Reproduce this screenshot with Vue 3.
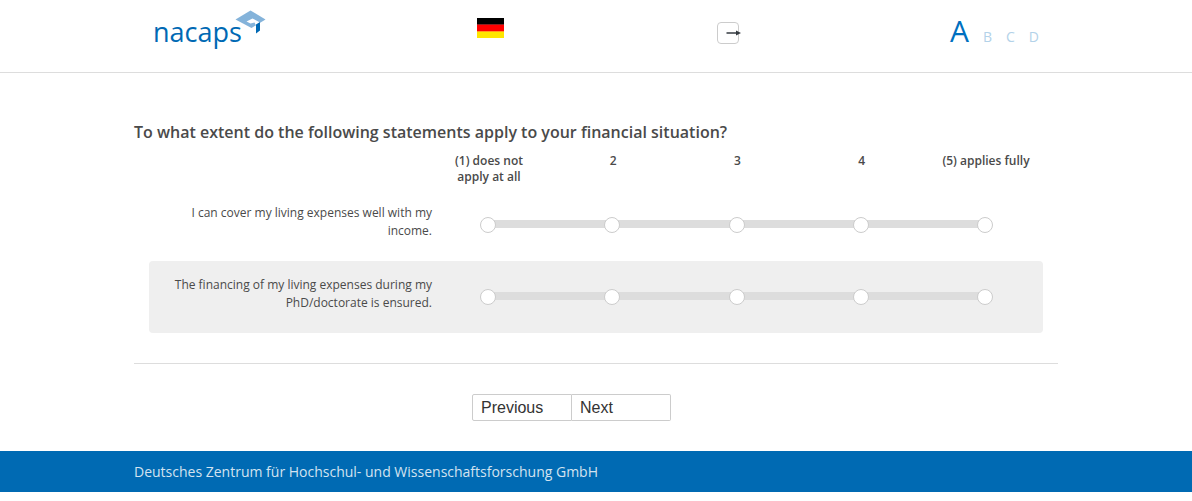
<script setup>
import { reactive } from 'vue'

const sections = ['A', 'B', 'C', 'D']
const scale = ['(1) does not apply at all', '2', '3', '4', '(5) applies fully']
const items = [
  { id: 'income', text: 'I can cover my living expenses well with my income.' },
  { id: 'doctorate', text: 'The financing of my living expenses during my PhD/doctorate is ensured.' },
]
const answers = reactive({ income: null, doctorate: null })
</script>

<template>
  <div class="page">
    <header class="header">
      <div class="header-inner">
        <a class="logo" href="#" aria-label="nacaps">
          <svg width="114" height="42" viewBox="0 0 114 42">
            <text x="0" y="34" class="logo-text">nacaps</text>
            <path d="M82.500 11.500 L97.500 2.500 L112.500 11.500 L98.500 20 Z" fill="#84b3da" />
            <path d="M93.500 13.500 L99.500 10.500 L107 14.500 L103 17.500 L101.500 14.500 L97.500 15.500 Z" fill="#fff" />
            <path d="M103 16.500 L107 14 L107 22.500 L103 25.500 Z" fill="#0069b4" />
          </svg>
        </a>
        <a class="flag" href="#" aria-label="Deutsch">
          <svg width="27" height="20" viewBox="0 0 27 20">
            <rect width="27" height="20" fill="#ffe600" />
            <rect width="27" height="13" fill="#f00" />
            <rect width="27" height="6" fill="#000" />
            <rect y="6" width="27" height="1" fill="#8c2020" />
            <rect y="13" width="27" height="1" fill="#ff9a20" />
          </svg>
        </a>
        <a class="exit" href="#" aria-label="Exit">
          <svg width="24" height="22" viewBox="0 0 24 22">
            <rect x="0.500" y="0.500" width="21" height="21" rx="3.500" fill="#fff" stroke="#ccc" />
            <path d="M9.500 11 H20" stroke="#343a40" stroke-width="1.500" />
            <path d="M19 8.500 L24 11 L19 13.500 Z" fill="#343a40" />
          </svg>
        </a>
        <ol class="sections">
          <li v-for="(name, i) in sections" :key="name" :class="{ current: i === 0 }">{{ name }}</li>
        </ol>
      </div>
    </header>

    <main class="content">
      <h1 class="title">To what extent do the following statements apply to your financial situation?</h1>
      <div class="matrix">
        <div class="row head">
          <div class="question"></div>
          <div class="options">
            <span v-for="label in scale" :key="label" class="option">{{ label }}</span>
          </div>
        </div>
        <div
          v-for="item in items"
          :key="item.id"
          class="row item"
          role="radiogroup"
          :aria-labelledby="item.id"
        >
          <div :id="item.id" class="question">{{ item.text }}</div>
          <div class="options track">
            <label v-for="(label, n) in scale" :key="label" class="option">
              <input v-model="answers[item.id]" type="radio" :name="item.id + '-answer'" :value="n + 1" :aria-label="label" />
            </label>
          </div>
        </div>
      </div>
      <div class="actions">
        <button type="button">Previous</button>
        <button type="button">Next</button>
      </div>
    </main>

    <footer class="footer">
      <div class="footer-inner">Deutsches Zentrum für Hochschul- und Wissenschaftsforschung GmbH</div>
    </footer>
  </div>
</template>

<style>
body {
  background: #fff;
}
</style>

<style scoped>
.page {
  font-family: "Open Sans", "Noto Sans", sans-serif;
  color: #4a4a4a;
}
.page * {
  box-sizing: border-box;
}
.header {
  border-bottom: 1px solid #ddd;
}
.header-inner {
  display: grid;
  grid-template-columns: 324fr 240fr 233fr auto;
  align-items: start;
  max-width: 886px;
  height: 72px;
  margin: 0 auto;
}
.header a {
  justify-self: start;
}
.header svg {
  display: block;
}
.logo {
  margin-top: 8px;
}
.logo-text {
  font-size: 27px;
  fill: #0069b4;
}
.flag {
  margin-top: 18px;
}
.exit {
  margin-top: 22px;
}
.sections {
  display: flex;
  align-items: baseline;
  gap: 14px;
  margin: 11px 0 0;
  padding: 0;
  list-style: none;
  font-size: 14px;
  line-height: 40px;
  color: #b3d2e9;
}
.sections .current {
  font-size: 30px;
  color: #0070c0;
}
.content {
  max-width: 924px;
  margin: 0 auto;
  padding: 47px 0 30px;
}
.title {
  margin: 0 0 9px;
  font-size: 16px;
  font-weight: 600;
  line-height: 24px;
}
.matrix {
  padding: 0 15px 30px;
  border-bottom: 1px solid #ddd;
}
.row {
  display: flex;
  padding-right: 8px;
  border-radius: 4px;
  font-size: 12px;
}
.head {
  padding-bottom: 4px;
  font-weight: 600;
  line-height: 16px;
}
.item {
  min-height: 72px;
  line-height: 18px;
}
.item:nth-child(odd) {
  background: #efefef;
}
.question {
  flex: none;
  width: 289px;
  text-align: right;
}
.item .question {
  padding: 15px 6px 21px 20px;
}
.options {
  display: flex;
  flex: 1;
  justify-content: space-between;
  text-align: center;
}
.option {
  width: 100px;
}
.head .option {
  padding: 0 1px 0 3px;
}
.track {
  position: relative;
  align-items: center;
}
.track::before {
  content: "";
  position: absolute;
  top: 31px;
  left: 50px;
  right: 50px;
  height: 8px;
  background: #ddd;
}
.track .option {
  position: relative;
  display: flex;
  justify-content: center;
}
input {
  appearance: none;
  width: 16px;
  height: 16px;
  margin: 0;
  border: 1px solid #ccc;
  border-radius: 50%;
  background: #fff;
}
input:checked {
  background: #0069b4;
}
.actions {
  display: flex;
  justify-content: center;
  margin-top: 30px;
  padding-right: 49px;
}
button {
  width: 100px;
  height: 27px;
  padding: 0 8px;
  border: 1px solid #ccc;
  border-radius: 2px 0 0 2px;
  background: #fff;
  color: #333;
  font: 16px/24px "Liberation Sans", Arial, sans-serif;
  text-align: left;
}
button + button {
  width: 99px;
  border-left: 0;
  border-radius: 0 2px 2px 0;
}
.footer {
  background: #006ab3;
  color: #d3e3f0;
  font-size: 14px;
  line-height: 41px;
}
.footer-inner {
  max-width: 924px;
  margin: 0 auto;
}
</style>
